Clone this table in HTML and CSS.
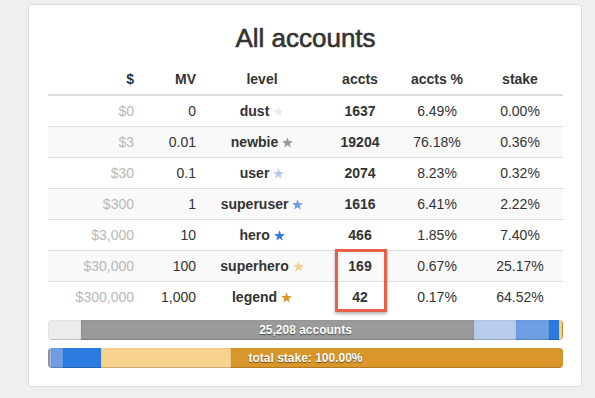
FILE: index.html
```html
<!DOCTYPE html>
<html>
<head>
<meta charset="utf-8">
<title>All accounts</title>
<link rel="stylesheet" href="styles.css">
</head>
<body>
<div class="card">
  <h2 class="title">All accounts</h2>
  <div class="table-wrap">
    <table class="accounts">
      <colgroup>
        <col class="c-usd"><col class="c-mv"><col class="c-level"><col class="c-accts"><col class="c-pct"><col class="c-stake">
      </colgroup>
      <thead>
        <tr><th class="r">$</th><th class="r">MV</th><th class="c">level</th><th class="c">accts</th><th class="c">accts %</th><th class="c">stake</th></tr>
      </thead>
      <tbody>
        <tr><td class="r usd">$0</td><td class="r">0</td><td class="c name">dust <svg class="star s-dust" viewBox="0 0 10 10"><polygon points="5,0.2 6.23,3.7 9.95,3.79 7,6.05 8.06,9.61 5,7.5 1.94,9.61 3,6.05 0.05,3.79 3.77,3.7"/></svg></td><td class="c b">1637</td><td class="c">6.49%</td><td class="c">0.00%</td></tr>
        <tr><td class="r usd">$3</td><td class="r">0.01</td><td class="c name">newbie <svg class="star s-newbie" viewBox="0 0 10 10"><polygon points="5,0.2 6.23,3.7 9.95,3.79 7,6.05 8.06,9.61 5,7.5 1.94,9.61 3,6.05 0.05,3.79 3.77,3.7"/></svg></td><td class="c b">19204</td><td class="c">76.18%</td><td class="c">0.36%</td></tr>
        <tr><td class="r usd">$30</td><td class="r">0.1</td><td class="c name">user <svg class="star s-user" viewBox="0 0 10 10"><polygon points="5,0.2 6.23,3.7 9.95,3.79 7,6.05 8.06,9.61 5,7.5 1.94,9.61 3,6.05 0.05,3.79 3.77,3.7"/></svg></td><td class="c b">2074</td><td class="c">8.23%</td><td class="c">0.32%</td></tr>
        <tr><td class="r usd">$300</td><td class="r">1</td><td class="c name">superuser <svg class="star s-superuser" viewBox="0 0 10 10"><polygon points="5,0.2 6.23,3.7 9.95,3.79 7,6.05 8.06,9.61 5,7.5 1.94,9.61 3,6.05 0.05,3.79 3.77,3.7"/></svg></td><td class="c b">1616</td><td class="c">6.41%</td><td class="c">2.22%</td></tr>
        <tr><td class="r usd">$3,000</td><td class="r">10</td><td class="c name">hero <svg class="star s-hero" viewBox="0 0 10 10"><polygon points="5,0.2 6.23,3.7 9.95,3.79 7,6.05 8.06,9.61 5,7.5 1.94,9.61 3,6.05 0.05,3.79 3.77,3.7"/></svg></td><td class="c b">466</td><td class="c">1.85%</td><td class="c">7.40%</td></tr>
        <tr><td class="r usd">$30,000</td><td class="r">100</td><td class="c name">superhero <svg class="star s-superhero" viewBox="0 0 10 10"><polygon points="5,0.2 6.23,3.7 9.95,3.79 7,6.05 8.06,9.61 5,7.5 1.94,9.61 3,6.05 0.05,3.79 3.77,3.7"/></svg></td><td class="c b">169</td><td class="c">0.67%</td><td class="c">25.17%</td></tr>
        <tr><td class="r usd">$300,000</td><td class="r">1,000</td><td class="c name">legend <svg class="star s-legend" viewBox="0 0 10 10"><polygon points="5,0.2 6.23,3.7 9.95,3.79 7,6.05 8.06,9.61 5,7.5 1.94,9.61 3,6.05 0.05,3.79 3.77,3.7"/></svg></td><td class="c b">42</td><td class="c">0.17%</td><td class="c">64.52%</td></tr>
      </tbody>
    </table>
    <div class="highlight"></div>
  </div>

  <div class="progress">
    <div class="segments">
      <div class="seg g-dust" style="width:6.49%"></div>
      <div class="seg g-newbie" style="width:76.18%"></div>
      <div class="seg g-user" style="width:8.23%"></div>
      <div class="seg g-superuser" style="width:6.41%"></div>
      <div class="seg g-hero" style="width:1.85%"></div>
      <div class="seg g-superhero" style="width:0.67%"></div>
      <div class="seg g-legend" style="width:0.17%"></div>
    </div>
    <div class="label">25,208 accounts</div>
  </div>

  <div class="progress">
    <div class="segments">
      <div class="seg g-newbie" style="width:0.36%"></div>
      <div class="seg g-user" style="width:0.32%"></div>
      <div class="seg g-superuser" style="width:2.22%"></div>
      <div class="seg g-hero" style="width:7.40%"></div>
      <div class="seg g-superhero" style="width:25.17%"></div>
      <div class="seg g-legend" style="width:64.52%"></div>
    </div>
    <div class="label">total stake: 100.00%</div>
  </div>
</div>
</body>
</html>
```

FILE: styles.css
```css
html, body {
  margin: 0;
  padding: 0;
}
body {
  background: #efefef;
  font-family: "Liberation Sans", Arial, Helvetica, sans-serif;
  font-size: 14px;
  line-height: 20px;
  color: #333;
}
.card {
  box-sizing: border-box;
  width: 554px;
  margin: 4px 0 0 28px;
  padding: 19px 18px 18px 19px;
  background: #fff;
  border: 1px solid #dcdcdc;
  border-radius: 4px;
}
.title {
  margin: 0 0 11px;
  font-size: 26px;
  line-height: 29px;
  font-weight: 400;
  -webkit-text-stroke: 0.6px #333;
  text-align: center;
  color: #333;
}
.table-wrap {
  position: relative;
}
.accounts {
  width: 515px;
  table-layout: fixed;
  border-collapse: collapse;
  border-spacing: 0;
}
.c-usd { width: 91px; }
.c-mv { width: 62px; }
.c-level { width: 122px; }
.c-accts { width: 74px; }
.c-pct { width: 80px; }
.c-stake { width: 86px; }
.accounts th,
.accounts td {
  padding: 5px;
  line-height: 20px;
  white-space: nowrap;
}
.accounts th {
  font-weight: bold;
  border-bottom: 2px solid #ddd;
}
.accounts td {
  border-top: 1px solid #ddd;
}
.accounts tbody tr:first-child td {
  border-top: 0;
}
.accounts tbody tr:nth-child(even) td {
  background: #f9f9f9;
}
.r { text-align: right; }
.c { text-align: center; }
.b { font-weight: bold; }
.usd { color: #b8b8b8; }
.name { font-weight: bold; }
.star {
  width: 11px;
  height: 11px;
  vertical-align: -1px;
}
.s-dust { fill: #ececec; }
.s-newbie { fill: #999; }
.s-user { fill: #b8ccee; }
.s-superuser { fill: #6e9de3; }
.s-hero { fill: #2b7be0; }
.s-superhero { fill: #f8d390; }
.s-legend { fill: #d9962b; }
.highlight {
  position: absolute;
  left: 287px;
  top: 185px;
  width: 46px;
  height: 57px;
  border: 3px solid #ea5f4a;
  box-shadow: 0 2px 3px rgba(0, 0, 0, 0.3);
}
.progress {
  display: grid;
  margin-top: 8px;
  height: 20px;
  border-radius: 4px;
  overflow: hidden;
  background: #f5f5f5;
  box-shadow: inset 0 1px 2px rgba(0, 0, 0, 0.15);
}
.segments,
.label {
  grid-area: 1 / 1;
}
.segments {
  display: flex;
  height: 20px;
}
.seg {
  height: 20px;
  flex: none;
  box-shadow: inset 0 -1px 0 rgba(0, 0, 0, 0.15), inset 0 0 2px rgba(0, 0, 0, 0.12);
}
.g-dust { background: #ececec; }
.g-newbie { background: #9a9a9a; }
.g-user { background: #b8ccee; }
.g-superuser { background: #6e9de3; }
.g-hero { background: #2b7be0; }
.g-superhero { background: #f8d390; }
.g-legend { background: #d9962b; }
.label {
  text-align: center;
  font-size: 12px;
  font-weight: bold;
  line-height: 20px;
  color: #fff;
  text-shadow: 0 1px 1px rgba(0, 0, 0, 0.5);
}
```
